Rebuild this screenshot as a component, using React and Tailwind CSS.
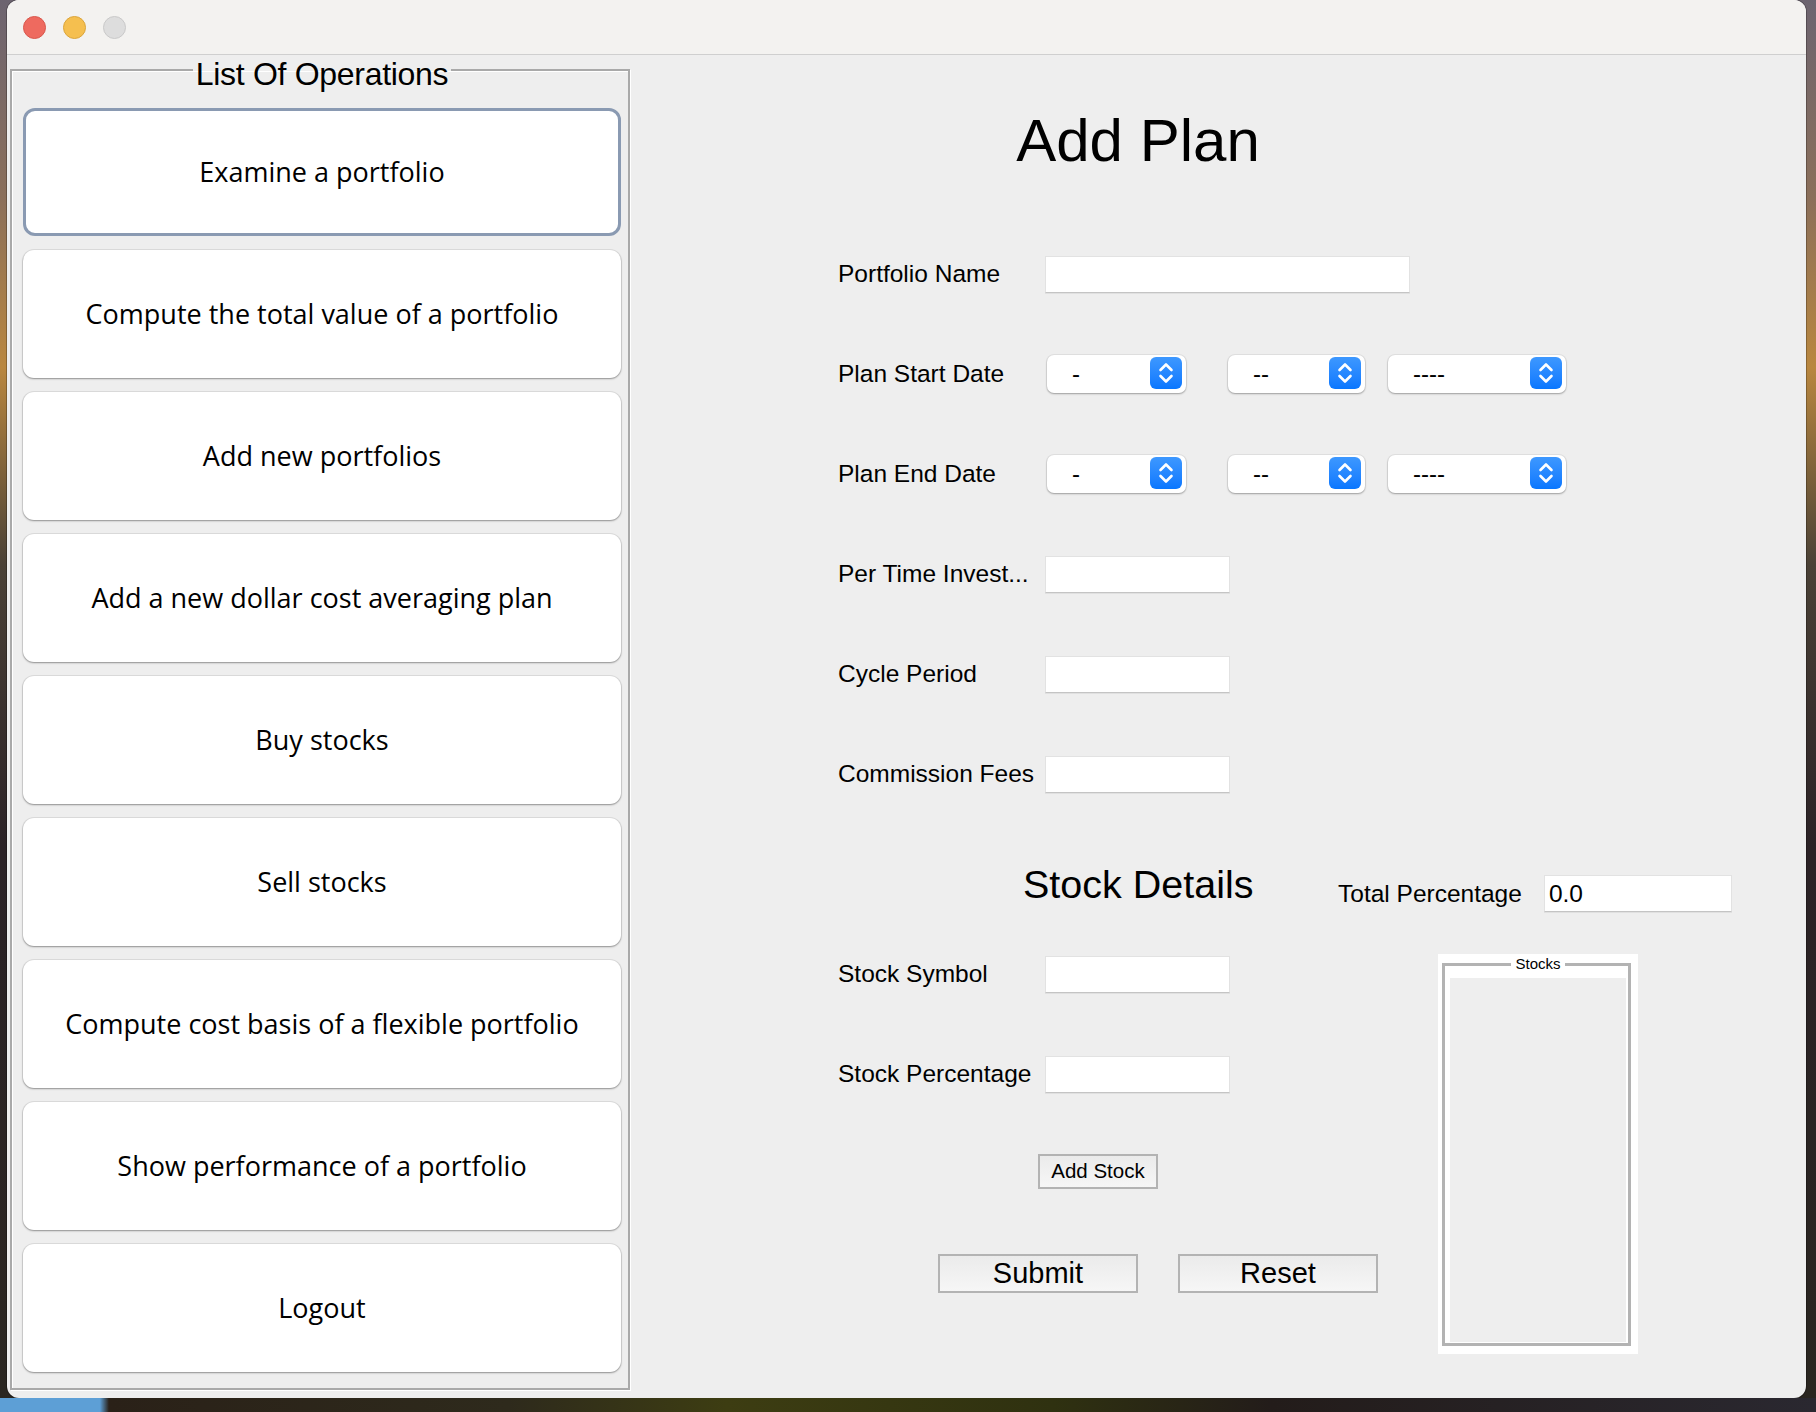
const ops = [
  'Examine a portfolio',
  'Compute the total value of a portfolio',
  'Add new portfolios',
  'Add a new dollar cost averaging plan',
  'Buy stocks',
  'Sell stocks',
  'Compute cost basis of a flexible portfolio',
  'Show performance of a portfolio',
  'Logout',
]

function Stepper() {
  return (
    <div className="w-[32px] h-[32px] mt-[2px] self-start rounded-[6px] bg-linear-to-b from-[#3d98ff] to-[#0877ff] flex items-center justify-center">
      <svg width="32" height="32" viewBox="0 0 32 32" fill="none" stroke="white" strokeWidth="2.6" strokeLinecap="round" strokeLinejoin="round">
        <path d="M10.5 13 L16 7.5 L21.5 13" />
        <path d="M10.5 19 L16 24.5 L21.5 19" />
      </svg>
    </div>
  )
}

function Select({ value, w }) {
  return (
    <div className={`${w} h-[38px] bg-white rounded-[7px] shadow-[0_0_0_1px_rgba(0,0,0,0.05),0_1px_2px_rgba(0,0,0,0.3)] flex justify-between pl-[25px] pr-[4px]`}>
      <span className="self-center text-[24px] leading-none">{value}</span>
      <Stepper />
    </div>
  )
}

function Field({ w = 'w-[185px]', value }) {
  return (
    <input
      readOnly
      defaultValue={value}
      className={`${w} h-[37px] bg-white border border-[#e2e2e2] border-b-[#c4c4c4] shadow-[0_1px_0_rgba(0,0,0,0.06)] outline-none px-[4px] text-[24.5px] text-black`}
    />
  )
}

function Row({ label, children }) {
  return (
    <div className="flex items-center h-[38px]">
      <span className="w-[207px] text-[24.5px] leading-[28px] whitespace-nowrap">{label}</span>
      {children}
    </div>
  )
}

function GrayButton({ children, className }) {
  return (
    <button className={`border-2 border-[#b3b3b3] bg-linear-to-b from-[#ebebeb] to-[#f6f6f6] text-black flex items-center justify-center leading-none ${className}`}>
      {children}
    </button>
  )
}

export default function App() {
  return (
    <div className="w-[1816px] h-[1412px] overflow-hidden flex flex-col bg-[linear-gradient(180deg,#6c6470_0%,#8b6f5a_14%,#b9873f_26%,#4a4136_40%,#2b2226_60%,#2a2620_100%)] font-['Liberation_Sans',Arial,sans-serif] text-black">
      <div className="flex pl-[7px]">
        <div className="w-[1799px] h-[1398px] rounded-[12px] overflow-hidden flex flex-col bg-[#eeeeee] shadow-[0_0_0_1px_rgba(0,0,0,0.25)]">
          {/* title bar */}
          <div className="h-[55px] shrink-0 bg-[#f3f2f0] border-b border-[#cfcfcf] flex items-center pl-[16px] gap-[17px]">
            <span className="w-[23px] h-[23px] rounded-full bg-[#ee6a5f] border border-[#d9574c]" />
            <span className="w-[23px] h-[23px] rounded-full bg-[#f5bf4f] border border-[#dba53b]" />
            <span className="w-[23px] h-[23px] rounded-full bg-[#dddddd] border border-[#c9c9c9]" />
          </div>

          <div className="flex flex-1">
            {/* operations list */}
            <fieldset className="ml-[3px] mt-[-4px] w-[620px] h-[1339px] border-2 border-[#a9a9a9] shadow-[inset_1px_1px_0_#ffffff,1px_1px_0_#ffffff] pl-[11px] pr-[7px] pt-[19px] pb-[14px]">
              <legend className="mx-auto px-[3px] pt-[8px] text-[32px] leading-[30px] tracking-[-0.3px]">List Of Operations</legend>
              <div className="flex flex-col gap-[14px]">
                {ops.map((op, i) => (
                  <button
                    key={op}
                    className={`h-[128px] w-full bg-white flex items-center justify-center font-['Open_Sans',sans-serif] text-[27px] text-black ${
                      i === 0
                        ? 'rounded-[12px] border-[3px] border-[#8a9ab2]'
                        : 'rounded-[11px] shadow-[0_0_0_1px_rgba(0,0,0,0.07),0_1px_2px_rgba(0,0,0,0.35)]'
                    }`}
                  >
                    {op}
                  </button>
                ))}
              </div>
            </fieldset>

            {/* add plan form */}
            <div className="flex-1 pl-[208px]">
              <div className="w-[600px] h-[80px] mt-[46px] flex items-center justify-center text-[60px] leading-none">Add Plan</div>

              <div className="mt-[74px] flex flex-col gap-[62px]">
                <Row label="Portfolio Name">
                  <Field w="w-[365px]" />
                </Row>
                <Row label="Plan Start Date">
                  <div className="flex ml-[2px]">
                    <Select value="-" w="w-[139px]" />
                    <div className="ml-[42px]"><Select value="--" w="w-[137px]" /></div>
                    <div className="ml-[23px]"><Select value="----" w="w-[178px]" /></div>
                  </div>
                </Row>
                <Row label="Plan End Date">
                  <div className="flex ml-[2px]">
                    <Select value="-" w="w-[139px]" />
                    <div className="ml-[42px]"><Select value="--" w="w-[137px]" /></div>
                    <div className="ml-[23px]"><Select value="----" w="w-[178px]" /></div>
                  </div>
                </Row>
                <Row label="Per Time Invest...">
                  <Field />
                </Row>
                <Row label="Cycle Period">
                  <Field />
                </Row>
                <Row label="Commission Fees">
                  <Field />
                </Row>
              </div>

              {/* stock details header */}
              <div className="mt-[71px] flex items-start">
                <div className="w-[500px] h-[40px] pl-[185px] text-[39.5px] leading-[40px] whitespace-nowrap">Stock Details</div>
                <div className="mt-[11px] h-[37px] flex items-center">
                  <span className="text-[24.5px] leading-[28px]">Total Percentage</span>
                  <div className="ml-[22px]">
                    <Field w="w-[188px]" value="0.0" />
                  </div>
                </div>
              </div>

              <div className="flex items-start">
                <div className="w-[600px] pt-[43px] flex flex-col">
                  <div className="flex flex-col gap-[62px]">
                    <Row label="Stock Symbol">
                      <Field />
                    </Row>
                    <Row label="Stock Percentage">
                      <Field />
                    </Row>
                  </div>
                  <GrayButton className="ml-[200px] mt-[61px] w-[120px] h-[35px] text-[20.5px]">Add Stock</GrayButton>
                  <div className="flex ml-[100px] mt-[65px] gap-[40px]">
                    <GrayButton className="w-[200px] h-[39px] text-[29px]">Submit</GrayButton>
                    <GrayButton className="w-[200px] h-[39px] text-[29px]">Reset</GrayButton>
                  </div>
                </div>

                <div className="mt-[42px] w-[200px] h-[400px] bg-white pl-[4px] pr-[7px] pt-[2px] pb-[8px]">
                  <fieldset className="h-full border-[3px] border-[#b3b3b3] pl-[5px] pr-[2px] pt-[6px] pb-[1px] flex flex-col">
                    <legend className="mx-auto px-[4px] text-[15px] leading-[16px]">Stocks</legend>
                    <div className="h-full bg-[#eeeeee]" />
                  </fieldset>
                </div>
              </div>
            </div>
          </div>
        </div>
      </div>
      <div className="h-[14px] bg-[linear-gradient(90deg,#5d9fd6_0%,#5d9fd6_5.5%,#2a2118_6%,#2e2a1c_28%,#3d3d12_40%,#2f3110_58%,#231c1a_70%,#2a2830_100%)]" />
    </div>
  )
}
